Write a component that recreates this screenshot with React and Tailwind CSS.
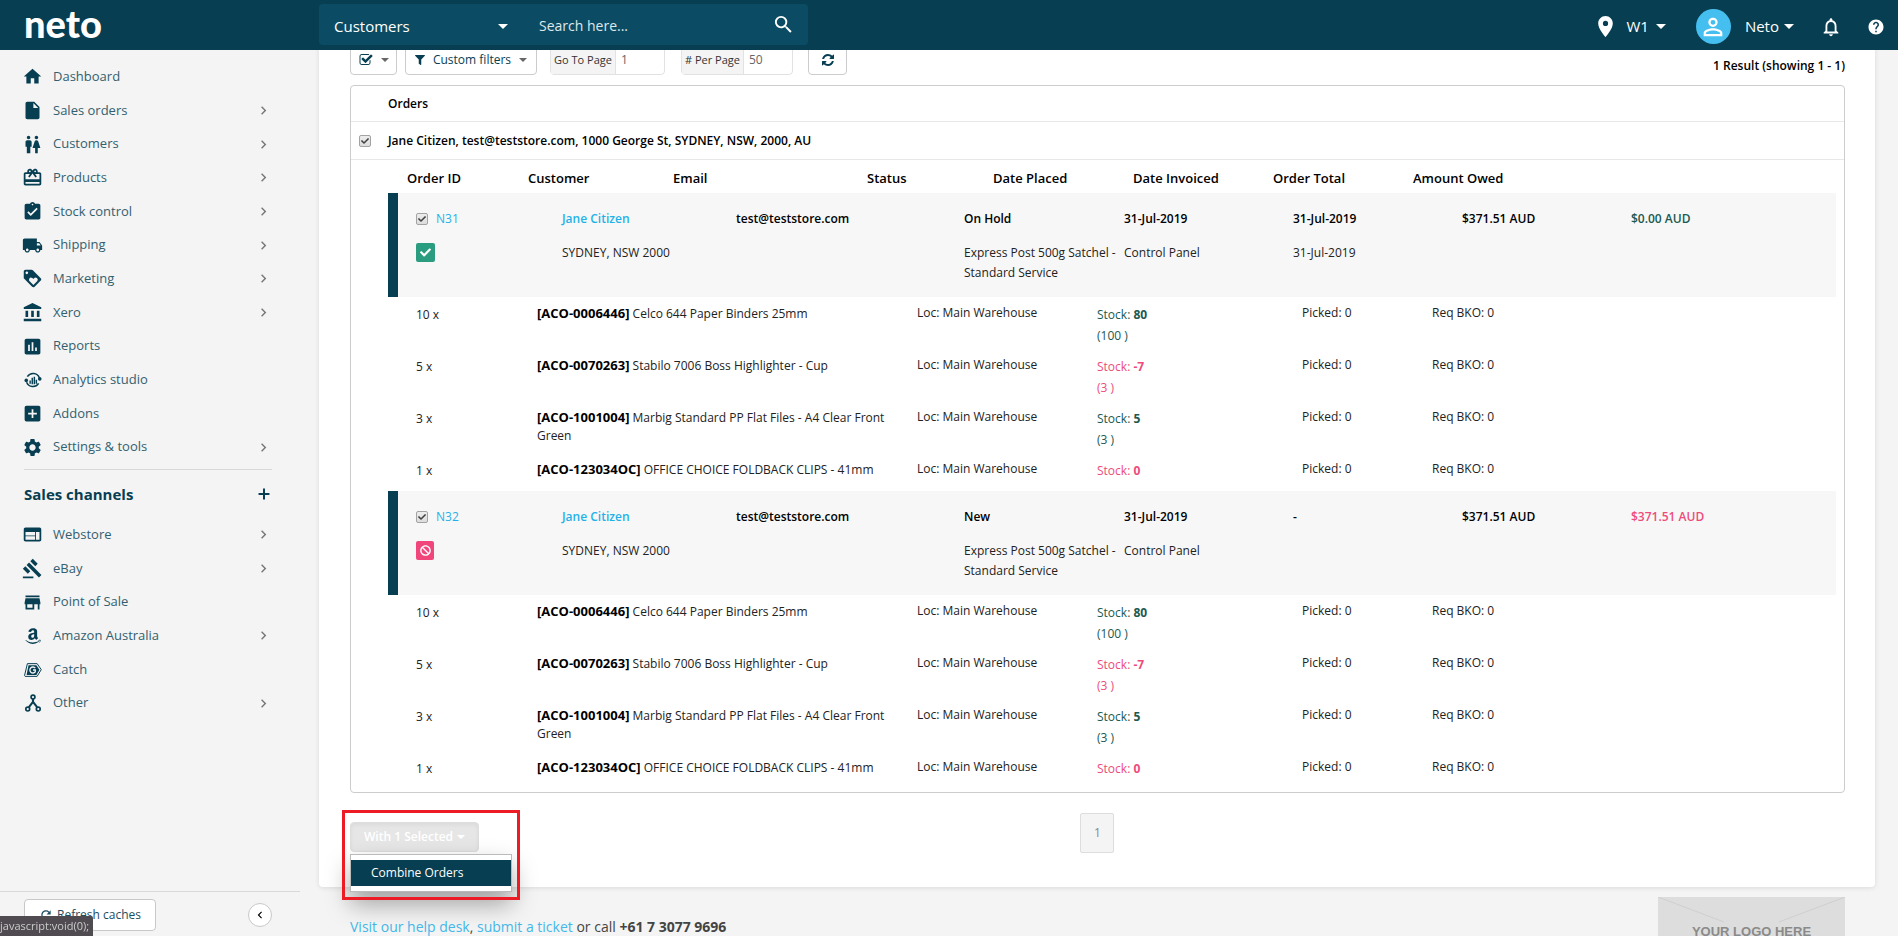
import { useState } from "react";
import {
  MdHome,
  MdInsertDriveFile,
  MdWc,
  MdCardGiftcard,
  MdAssignmentTurnedIn,
  MdLocalShipping,
  MdLoyalty,
  MdAccountBalance,
  MdAssessment,
  MdAddBox,
  MdSettings,
  MdWeb,
  MdGavel,
  MdStore,
  MdLocationOn,
  MdPersonOutline,
  MdNotificationsNone,
  MdHelp,
  MdSearch,
  MdChevronRight,
  MdChevronLeft,
  MdRefresh,
} from "react-icons/md";
import { FaAmazon, FaFilter, FaCheck, FaBan } from "react-icons/fa";
import { Plus } from "lucide-react";

const AnalyticsIcon = () => (
  <svg width="18" height="18" viewBox="0 0 24 24" fill="none" stroke="currentColor" strokeWidth="2">
    <path d="M4.500 7.500A9 9 0 0 1 20.500 9" />
    <path d="M19.500 16.500A9 9 0 0 1 3.500 15" />
    <circle cx="21" cy="10.500" r="2.400" fill="currentColor" stroke="none" />
    <circle cx="3" cy="12.500" r="2.400" fill="currentColor" stroke="none" />
    <path d="M8.200 17v-4.500M11 17.500V9M13.800 17.500V7.500M16.500 17v-5.500" strokeWidth="1.900" />
  </svg>
);

const CatchIcon = () => (
  <svg width="18" height="18" viewBox="0 0 24 24" fill="none" stroke="currentColor">
    <path d="M4.500 3.500h13l5.500 8-5.500 9h-16l-.8-1z" strokeWidth="1.300" strokeLinejoin="round" />
    <path d="M6 5.500h10.500l4 6-4 7H3.500z" fill="currentColor" stroke="none" />
    <path d="M15 9.500a4 4 0 1 0 0 5v-2.500h-3" stroke="#f4f4f4" strokeWidth="1.800" />
  </svg>
);

const NodesIcon = () => (
  <svg width="18" height="18" viewBox="0 0 24 24" fill="none" stroke="currentColor" strokeWidth="2.200">
    <circle cx="12" cy="4" r="2.600" />
    <circle cx="5" cy="20" r="2.600" />
    <circle cx="19" cy="20" r="2.600" />
    <path d="M12 6.700v5.300M12 10.500L6.500 17.500M12 10.500l5.500 7" strokeWidth="2.800" />
  </svg>
);

const CheckSquareIcon = () => (
  <svg width="14" height="14" viewBox="0 0 1792 1792" fill="currentColor">
    <path d="M1472 930v318q0 119-84.500 203.500t-203.500 84.500h-832q-119 0-203.500-84.500t-84.500-203.500v-832q0-119 84.500-203.500t203.500-84.500h832q63 0 117 25 15 7 18 23 3 17-9 29l-49 49q-10 10-23 10-3 0-9-2-23-6-45-6h-832q-66 0-113 47t-47 113v832q0 66 47 113t113 47h832q66 0 113-47t47-113v-254q0-13 9-22l64-64q10-10 23-10 6 0 12 3 20 8 20 29zm231-489l-814 814q-24 24-57 24t-57-24l-430-430q-24-24-24-57t24-57l110-110q24-24 57-24t57 24l263 263 647-647q24-24 57-24t57 24l110 110q24 24 24 57t-24 57z" />
  </svg>
);

const ReloadIcon = () => (
  <svg width="14" height="14" viewBox="0 0 1792 1792" fill="currentColor">
    <path d="M1639 1056q0 5-1 7-64 268-268 434.500t-478 166.500q-146 0-282.500-55t-243.500-157l-129 129q-19 19-45 19t-45-19-19-45v-448q0-26 19-45t45-19h448q26 0 45 19t19 45-19 45l-137 137q71 66 161 102t187 36q134 0 250-65t186-179q11-17 53-117 8-23 30-23h192q13 0 22.500 9.500t9.500 22.500zm25-800v448q0 26-19 45t-45 19h-448q-26 0-45-19t-19-45 19-45l138-138q-148-137-349-137-134 0-250 65t-186 179q-11 17-53 117-8 23-30 23h-199q-13 0-22.500-9.500t-9.500-22.500v-7q65-268 270-434.500t480-166.500q146 0 284 55.500t245 156.500l130-129q19-19 45-19t45 19 19 45z" />
  </svg>
);

const Caret = ({ className }) => (
  <svg width="10" height="5" viewBox="0 0 10 5" fill="currentColor" className={className}>
    <path d="M0 0h10L5 5z" />
  </svg>
);

const mainMenu = [
  { label: "Dashboard", icon: MdHome },
  { label: "Sales orders", icon: MdInsertDriveFile, more: true },
  { label: "Customers", icon: MdWc, more: true },
  { label: "Products", icon: MdCardGiftcard, more: true },
  { label: "Stock control", icon: MdAssignmentTurnedIn, more: true },
  { label: "Shipping", icon: MdLocalShipping, more: true },
  { label: "Marketing", icon: MdLoyalty, more: true },
  { label: "Xero", icon: MdAccountBalance, more: true },
  { label: "Reports", icon: MdAssessment },
  { label: "Analytics studio", icon: AnalyticsIcon },
  { label: "Addons", icon: MdAddBox },
  { label: "Settings & tools", icon: MdSettings, more: true },
];

const channelMenu = [
  { label: "Webstore", icon: MdWeb, more: true },
  { label: "eBay", icon: MdGavel, more: true },
  { label: "Point of Sale", icon: MdStore },
  { label: "Amazon Australia", icon: FaAmazon, size: 18, more: true },
  { label: "Catch", icon: CatchIcon },
  { label: "Other", icon: NodesIcon, more: true },
];

const items = [
  { qty: 10, sku: "ACO-0006446", name: "Celco 644 Paper Binders 25mm", stock: "80", total: "100" },
  { qty: 5, sku: "ACO-0070263", name: "Stabilo 7006 Boss Highlighter - Cup", stock: "-7", total: "3", low: true },
  { qty: 3, sku: "ACO-1001004", name: "Marbig Standard PP Flat Files - A4 Clear Front Green", stock: "5", total: "3" },
  { qty: 1, sku: "ACO-123034OC", name: "OFFICE CHOICE FOLDBACK CLIPS - 41mm", stock: "0", low: true },
];

const orders = [
  { id: "N31", status: "On Hold", invoiced: "31-Jul-2019", due: "31-Jul-2019", owed: "$0.00 AUD", paid: true },
  { id: "N32", status: "New", invoiced: "-", due: "", owed: "$371.51 AUD", paid: false },
];

const Checkbox = ({ label }) => {
  const [checked, setChecked] = useState(true);
  return (
    <label className="relative inline-block w-3 h-3 align-top">
      <input
        type="checkbox"
        aria-label={label}
        checked={checked}
        onChange={(e) => setChecked(e.target.checked)}
        className="block appearance-none w-3 h-3 rounded-xs border border-[#a3a3a3] bg-linear-to-b from-[#ededed] to-[#dcdcdc]"
      />
      {checked && (
        <FaCheck size={8} className="absolute left-[2px] top-[2px] text-[#404040] pointer-events-none" />
      )}
    </label>
  );
};

const MenuList = ({ entries, className }) => (
  <ul className={`flex flex-col -ml-[2px] ${className}`}>
    {entries.map(({ label, icon: Icon, size = 21, more }) => (
      <li key={label} className="flex-1">
        <a href="#" className="flex h-full items-center gap-[10px] text-[13px] text-[#33606f]">
          <span className="w-[21px] flex justify-center text-[#073e52]">
            <Icon size={size} />
          </span>
          <span className="flex-1">{label}</span>
          {more && <MdChevronRight size={17} className="text-[#777]" />}
        </a>
      </li>
    ))}
  </ul>
);

const Sidebar = () => (
  <aside className="w-[300px] shrink-0 flex flex-col pt-[60px]">
    <nav className="flex-1 pl-6 pr-7">
      <MenuList entries={mainMenu} className="h-[404px]" />
      <div className="mt-[5px] border-t border-[#d8d8d8] flex items-center justify-between h-[49px] text-[#073e52]">
        <h2 className="text-[15px] font-bold">Sales channels</h2>
        <button aria-label="Add sales channel">
          <Plus size={16} strokeWidth={3} />
        </button>
      </div>
      <MenuList entries={channelMenu} className="h-[202px]" />
    </nav>
    <div className="h-[45px] border-t border-[#d8d8d8] pl-6 pr-7 pt-[2px] flex items-center justify-between">
      <button className="flex items-center gap-1 h-8 px-[14px] bg-white border border-[#c8c8c8] rounded-sm text-[12px] text-[#1d4d5f]">
        <MdRefresh size={14} />
        Refresh caches
      </button>
      <button aria-label="Collapse menu" className="w-6 h-6 rounded-full bg-white border border-[#c8c8c8] flex items-center justify-center">
        <MdChevronLeft size={14} />
      </button>
    </div>
  </aside>
);

const Header = () => (
  <header className="fixed inset-x-0 top-0 z-20 h-[50px] bg-[#073e52] text-white flex items-start">
    <a href="#" className="w-[319px] pl-6 font-[Lato] font-black text-[38px] leading-[46px]">
      neto
    </a>
    <div className="mt-1 w-[489px] h-[41px] rounded-sm bg-[#0b4c64] flex items-center pl-[15px] pr-[13px]">
      <button className="w-[205px] flex items-center justify-between pr-[31px] pt-[3px] text-[15px]">
        Customers
        <Caret />
      </button>
      <input
        type="text"
        aria-label="Search"
        placeholder="Search here..."
        className="flex-1 min-w-0 pt-[2px] text-[14px] text-white placeholder:text-[#dfe8ec] outline-none"
      />
      <button aria-label="Run search">
        <MdSearch size={23} />
      </button>
    </div>
    <div className="ml-auto pr-[13px] h-[50px] flex items-center pt-[3px] text-[15px]">
      <MdLocationOn size={25} />
      <button className="ml-2 flex items-center gap-[7px]">
        W1
        <Caret />
      </button>
      <span className="ml-[30px] w-[35px] h-[35px] rounded-full bg-[#45bfef] flex items-center justify-center">
        <MdPersonOutline size={28} />
      </span>
      <button className="ml-[14px] flex items-center gap-[5px]">
        Neto
        <Caret />
      </button>
      <button aria-label="Notifications" className="ml-[26px]">
        <MdNotificationsNone size={22} />
      </button>
      <button aria-label="Help" className="ml-[25px]">
        <MdHelp size={18} />
      </button>
    </div>
  </header>
);

const Toolbar = () => (
  <div className="flex items-end h-[30px] text-[12px] text-[#073e52]">
    <button aria-label="Select" className="h-full w-[47px] flex items-center justify-center gap-2 border border-[#ccc] rounded-sm">
      <CheckSquareIcon />
      <Caret className="w-2 h-1 text-[#666]" />
    </button>
    <button className="ml-2 h-full w-[132px] flex items-center justify-center gap-2 border border-[#ccc] rounded-sm">
      <FaFilter size={10} />
      Custom filters
      <Caret className="w-2 h-1 text-[#666]" />
    </button>
    <label className="ml-[13px] h-full flex items-center border border-[#e2e2e2] rounded-sm">
      <span className="w-[65px] h-full flex items-center justify-center bg-[#f4f4f4] border-r border-[#e2e2e2] text-[11px] text-[#333]">
        Go To Page
      </span>
      <input type="text" defaultValue="1" className="w-12 px-[5px] text-[12px] text-[#666] outline-none" />
    </label>
    <label className="ml-4 h-full flex items-center border border-[#e2e2e2] rounded-sm">
      <span className="w-[62px] h-full flex items-center justify-center bg-[#f4f4f4] border-r border-[#e2e2e2] text-[11px] text-[#333]">
        # Per Page
      </span>
      <input type="text" defaultValue="50" className="w-12 px-[5px] text-[12px] text-[#666] outline-none" />
    </label>
    <button aria-label="Reload" className="ml-[15px] h-full w-[39px] flex items-center justify-center border border-[#ccc] rounded-sm">
      <ReloadIcon />
    </button>
    <span className="ml-auto text-[12px] font-semibold text-black leading-[18px]">1 Result (showing 1 - 1)</span>
  </div>
);

const OrderSummary = ({ order }) => (
  <div className="border-l-10 border-[#073e52] bg-[#f7f7f7] pl-[18px] pt-4 pb-[14px]">
    <table className="w-full table-fixed text-left text-[12px] leading-5">
      <colgroup>
        <col className="w-[146px]" />
        <col className="w-[174px]" />
        <col className="w-[228px]" />
        <col className="w-[160px]" />
        <col className="w-[169px]" />
        <col className="w-[169px]" />
        <col className="w-[169px]" />
        <col />
      </colgroup>
      <tbody>
        <tr className="font-semibold align-top">
          <td className="pb-[14px]">
            <div className="flex items-center gap-2 h-5">
              <Checkbox label={`Select ${order.id}`} />
              <a href="#" className="font-normal text-[#1fb2e8]">
                {order.id}
              </a>
            </div>
          </td>
          <td>
            <a href="#" className="text-[#1fb2e8]">
              Jane Citizen
            </a>
          </td>
          <td>test@teststore.com</td>
          <td>{order.status}</td>
          <td>31-Jul-2019</td>
          <td>{order.invoiced}</td>
          <td>$371.51 AUD</td>
          <td className={order.paid ? "text-[#20594f]" : "text-[#ee4b7a]"}>{order.owed}</td>
        </tr>
        <tr className="align-top text-[#222]">
          <td>
            {order.paid ? (
              <span className="w-[19px] h-[19px] rounded-xs bg-[#2a9d80] text-white flex items-center justify-center">
                <FaCheck size={11} />
              </span>
            ) : (
              <span className="w-[18px] h-[19px] rounded-xs bg-[#f0467c] text-white flex items-center justify-center">
                <FaBan size={11} />
              </span>
            )}
          </td>
          <td>SYDNEY, NSW 2000</td>
          <td />
          <td className="pr-2">Express Post 500g Satchel - Standard Service</td>
          <td>Control Panel</td>
          <td>{order.due}</td>
          <td />
          <td />
        </tr>
      </tbody>
    </table>
  </div>
);

const OrderItems = () => (
  <table className="w-full table-fixed text-left text-[12px] leading-[18px]">
    <colgroup>
      <col className="w-[149px]" />
      <col className="w-[380px]" />
      <col className="w-[180px]" />
      <col className="w-[205px]" />
      <col className="w-[130px]" />
      <col />
    </colgroup>
    <tbody>
      {items.map((item) => (
        <tr key={item.sku} className="h-[52px] last:h-[38px] align-top text-[#222] *:pt-[7px]">
          <td className="pl-[28px] leading-[21px]">{item.qty} x</td>
          <td className="pr-4">
            <b className="text-[13px] text-black">[{item.sku}]</b> {item.name}
          </td>
          <td>Loc: Main Warehouse</td>
          <td className={`leading-[21px] ${item.low ? "text-[#ee4b7a]" : "text-[#20594f]"}`}>
            Stock: <b>{item.stock}</b>
            {item.total && <div>({item.total} )</div>}
          </td>
          <td>Picked: 0</td>
          <td>Req BKO: 0</td>
        </tr>
      ))}
    </tbody>
  </table>
);

const OrdersTable = () => (
  <div className="mt-[10px] border border-[#ccc] rounded-sm pb-[3px]">
    <table className="w-full table-fixed text-left text-[12px] text-black">
      <colgroup>
        <col className="w-[37px]" />
        <col />
      </colgroup>
      <thead>
        <tr className="h-[35px] border-b border-[#e8e8e8]">
          <td />
          <th className="pt-[2px] font-semibold">Orders</th>
        </tr>
      </thead>
      <tbody>
        <tr className="h-[38px] border-b border-[#e8e8e8]">
          <td className="pl-2 pt-2">
            <Checkbox label="Select Jane Citizen" />
          </td>
          <td className="pt-[2px] font-semibold">
            Jane Citizen, test@teststore.com, 1000 George St, SYDNEY, NSW, 2000, AU
          </td>
        </tr>
        <tr>
          <td />
          <td className="pr-2">
            <table className="w-full table-fixed text-left text-[13px]">
              <thead>
                <tr className="h-[33px] *:font-semibold *:pt-[6px]">
                  <th className="w-[140px] pl-[19px]">Order ID</th>
                  <th className="w-[145px]">Customer</th>
                  <th className="w-[194px]">Email</th>
                  <th className="w-[126px]">Status</th>
                  <th className="w-[140px]">Date Placed</th>
                  <th className="w-[140px]">Date Invoiced</th>
                  <th className="w-[140px]">Order Total</th>
                  <th>Amount Owed</th>
                </tr>
              </thead>
            </table>
            {orders.map((order) => (
              <div key={order.id}>
                <OrderSummary order={order} />
                <OrderItems />
              </div>
            ))}
          </td>
        </tr>
      </tbody>
    </table>
  </div>
);

const BulkActions = () => (
  <div className="relative mt-[9px] justify-self-start self-start">
    <button className="h-[30px] px-[13px] flex items-center gap-1 rounded-sm border border-[#ddd] bg-[#e6e6e6] text-[12px] font-semibold text-white inset-shadow-sm">
      With 1 Selected
      <Caret className="w-2 h-1" />
    </button>
    <ul className="absolute z-10 left-0 top-8 w-[162px] py-[5px] bg-white border border-[#bbb] shadow-[0_12px_24px_rgba(0,0,0,0.35)]">
      <li>
        <a href="#" className="block pl-5 bg-[#073e52] text-white text-[12px] leading-[26px]">
          Combine Orders
        </a>
      </li>
    </ul>
    <div className="absolute z-10 -left-2 -top-3 w-[178px] h-[90px] border-3 border-[#ed1c24] pointer-events-none" />
  </div>
);

const App = () => {
  return (
    <div className="h-screen overflow-hidden flex bg-[#f4f4f4] font-['Open_Sans','Noto_Sans',sans-serif] text-black">
      <Header />
      <Sidebar />
      <main className="flex-1 min-w-0 pl-[19px] pr-[23px]">
        <section className="bg-white rounded-b-sm pt-[45px] pl-[31px] pr-[30px] pb-[34px] shadow-[0_1px_5px_rgba(0,0,0,0.1)]">
          <Toolbar />
          <OrdersTable />
          <div className="mt-5 grid grid-cols-3">
            <BulkActions />
            <button className="justify-self-center w-[34px] h-10 border border-[#ddd] rounded-xs bg-[#f4f4f4] text-[12px] text-[#888]">
              1
            </button>
          </div>
        </section>
        <footer className="flex justify-between pl-[31px] pr-[30px] pt-[10px] text-[14px] leading-5 text-[#444]">
          <p className="pt-5">
            <a href="#" className="text-[#45b8ea]">Visit our help desk</a>,{" "}
            <a href="#" className="text-[#45b8ea]">submit a ticket</a> or call <b>+61 7 3077 9696</b>
          </p>
          <div className="relative w-[187px] h-[70px] bg-[#ddd] flex justify-center items-center font-['Liberation_Sans',sans-serif] font-bold text-[13px] text-[#8a8a8a]">
            <svg className="absolute inset-0" width="187" height="70" fill="none" stroke="#cfcfcf">
              <path d="M0 0l66 25M187 0l-66 25" />
            </svg>
            YOUR LOGO HERE
          </div>
        </footer>
      </main>
      <div className="fixed z-30 left-0 bottom-0 h-5 pr-1 bg-[#504b50] rounded-tr-xs text-[11px] leading-5 text-[#ccc]">
        javascript:void(0);
      </div>
    </div>
  );
};

export default App;
